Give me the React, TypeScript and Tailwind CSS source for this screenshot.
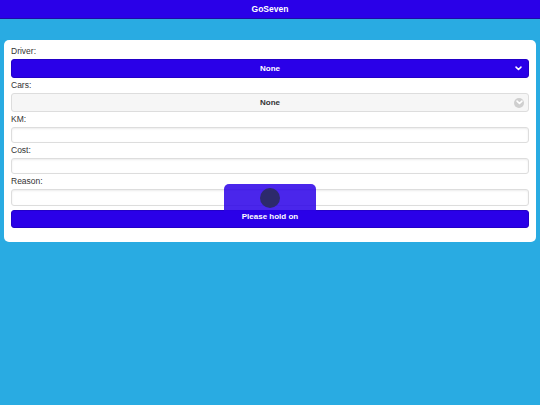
import React from 'react';

const Chevron = ({ className = '' }: { className?: string }) => (
  <svg width="7" height="5" viewBox="0 0 10 7" fill="none" className={className}>
    <path d="M1.5 1.5L5 5L8.5 1.5" stroke="currentColor" strokeWidth="2.2" strokeLinecap="round" strokeLinejoin="round" />
  </svg>
);

const Label = ({ children, first = false }: { children: React.ReactNode; first?: boolean }) => (
  <div className={`text-[8.5px] leading-[10px] text-[#333] mb-[3px] ${first ? '' : 'mt-[2px]'}`}>{children}</div>
);

const TextInput = ({ h = 'h-[16px]' }: { h?: string }) => (
  <div className={`${h} w-full bg-white border border-[#dddddd] rounded-[3px] shadow-[inset_0_1px_2px_rgba(0,0,0,0.08)]`} />
);

export default function App() {
  return (
    <div className="min-h-[405px] bg-[#29abe2] font-['Liberation_Sans',Arial,sans-serif]">
      <div className="h-[19px] bg-[#2a00e8] border-b border-[#1e0aa8] flex items-center justify-center text-white text-[8.5px] font-bold">
        GoSeven
      </div>

      <div className="px-[4px] pt-[21px]">
        <div className="relative bg-white rounded-[5px] px-[7px] pt-[6px] pb-[14px]">
          <Label first>Driver:</Label>
          <div className="relative h-[19px] bg-[#2a00e8] border border-[#2200c8] rounded-[3px] flex items-center justify-center text-white text-[8px] font-bold">
            None
            <Chevron className="absolute right-[6px] text-white" />
          </div>

          <Label>Cars:</Label>
          <div className="relative h-[19px] bg-[#f6f6f6] border border-[#dddddd] rounded-[3px] flex items-center justify-center text-[#333] text-[8px] font-bold">
            None
            <span className="absolute right-[4px] w-[10px] h-[10px] rounded-full bg-[#cfcfcf] flex items-center justify-center">
              <Chevron className="text-white" />
            </span>
          </div>

          <Label>KM:</Label>
          <TextInput />

          <Label>Cost:</Label>
          <TextInput />

          <Label>Reason:</Label>
          <TextInput h="h-[17px]" />

          <div className="mt-[4px] h-[18px] bg-[#2a00e8] border border-[#2200c8] rounded-[3px]" />

          <div className="absolute left-[220px] top-[144px] w-[92px] h-[42px] rounded-[5px] bg-[rgba(42,0,232,0.85)] flex flex-col items-center pt-[4px]">
            <div className="w-[20px] h-[20px] rounded-full bg-[#2d2a6b]" />
            <div className="mt-[4px] text-white text-[8px] font-bold leading-[10px]">Please hold on</div>
          </div>
        </div>
      </div>
    </div>
  );
}
